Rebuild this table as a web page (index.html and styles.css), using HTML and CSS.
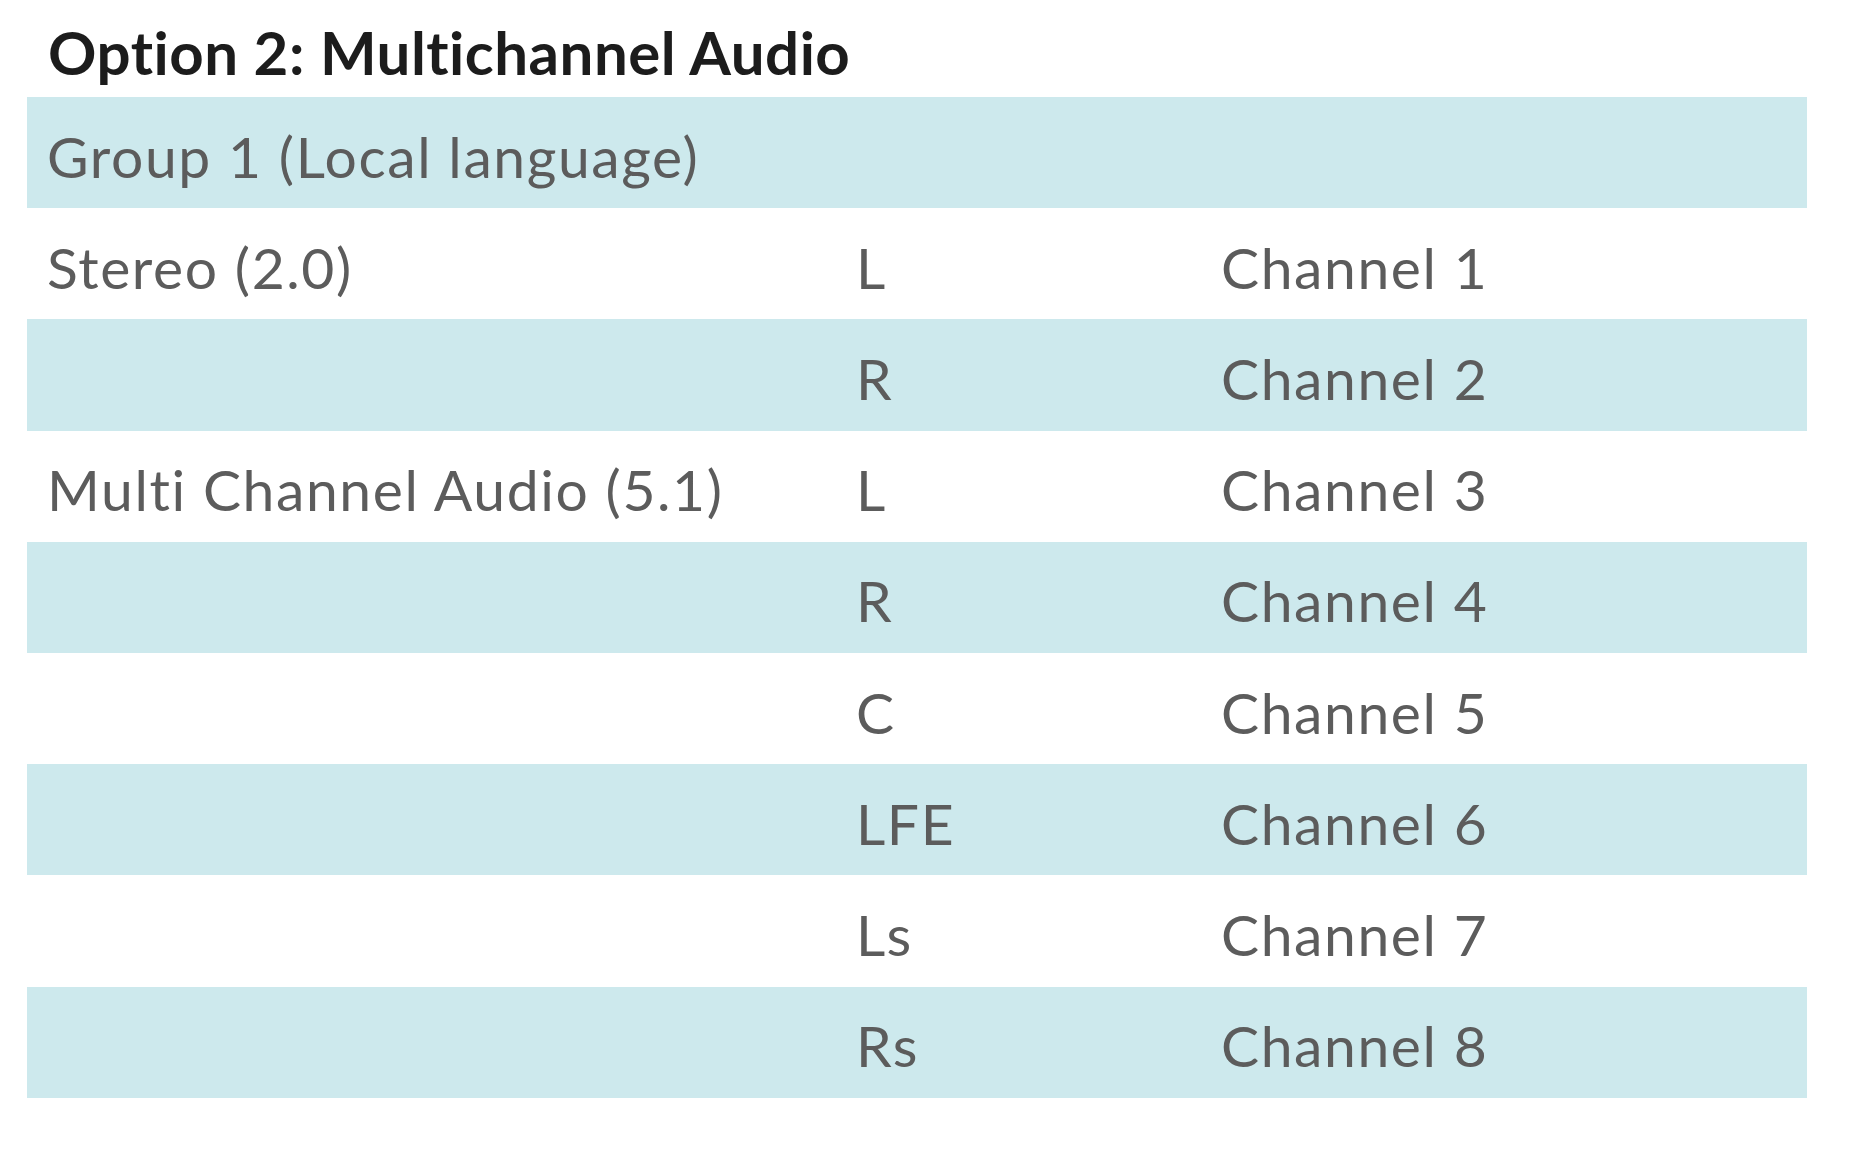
FILE: index.html
```html
<!DOCTYPE html>
<html lang="en">
<head>
<meta charset="utf-8">
<title>Option 2: Multichannel Audio</title>
<link rel="stylesheet" href="styles.css">
</head>
<body>
<main class="page">
  <h2 class="title">Option 2: Multichannel Audio</h2>
  <div class="table">
    <div class="row shaded"><span class="cell c1 wide">Group 1 (Local language)</span></div>
    <div class="row"><span class="cell c1">Stereo (2.0)</span><span class="cell c2">L</span><span class="cell c3">Channel 1</span></div>
    <div class="row shaded"><span class="cell c1"></span><span class="cell c2">R</span><span class="cell c3">Channel 2</span></div>
    <div class="row"><span class="cell c1">Multi Channel Audio (5.1)</span><span class="cell c2">L</span><span class="cell c3">Channel 3</span></div>
    <div class="row shaded"><span class="cell c1"></span><span class="cell c2">R</span><span class="cell c3">Channel 4</span></div>
    <div class="row"><span class="cell c1"></span><span class="cell c2">C</span><span class="cell c3">Channel 5</span></div>
    <div class="row shaded"><span class="cell c1"></span><span class="cell c2">LFE</span><span class="cell c3">Channel 6</span></div>
    <div class="row"><span class="cell c1"></span><span class="cell c2">Ls</span><span class="cell c3">Channel 7</span></div>
    <div class="row shaded"><span class="cell c1"></span><span class="cell c2">Rs</span><span class="cell c3">Channel 8</span></div>
  </div>
</main>
</body>
</html>
```
FILE: styles.css
```css
html, body {
  margin: 0;
  padding: 0;
  background: #ffffff;
}

.page {
  padding: 0 53px 0 27px;
  font-family: Lato, "Open Sans", sans-serif;
}

.title {
  margin: 0;
  height: 97px;
  box-sizing: border-box;
  padding: 22px 0 0 21px;
  font-size: 60px;
  line-height: 60px;
  font-weight: 700;
  letter-spacing: 0.5px;
  color: #1c1c1c;
}

.table {
  display: flex;
  flex-direction: column;
}

.row {
  display: grid;
  grid-template-columns: 829px 365px 1fr;
  height: 111.2px;
  align-items: center;
  color: #5c5c5c;
  font-size: 57px;
  font-weight: 400;
  letter-spacing: 1.6px;
}

.row.shaded {
  background: #cde9ed;
}

.cell {
  display: block;
  padding-top: 6px;
  white-space: nowrap;
}

.c1 {
  padding-left: 20px;
}

.wide {
  grid-column: 1 / -1;
}
```
